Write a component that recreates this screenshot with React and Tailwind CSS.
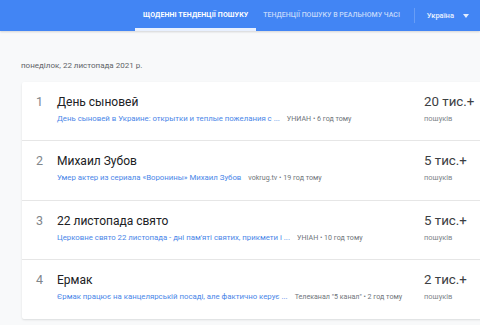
const items = [
  {
    n: 1,
    title: "День сыновей",
    link: "День сыновей в Украине: открытки и теплые пожелания с ...",
    meta: "УНИАН • 6 год тому",
    count: "20 тис.+",
  },
  {
    n: 2,
    title: "Михаил Зубов",
    link: "Умер актер из сериала «Воронины» Михаил Зубов",
    meta: "vokrug.tv • 19 год тому",
    count: "5 тис.+",
  },
  {
    n: 3,
    title: "22 листопада свято",
    link: "Церковне свято 22 листопада - дні пам'яті святих, прикмети і ...",
    meta: "УНІАН • 10 год тому",
    count: "5 тис.+",
  },
  {
    n: 4,
    title: "Ермак",
    link: "Єрмак працює на канцелярській посаді, але фактично керує ...",
    meta: 'Телеканал "5 канал" • 2 год тому',
    count: "2 тис.+",
  },
];

function Row({ item, last }) {
  return (
    <div
      className={
        "flex h-[59.3px] items-start " + (last ? "" : "border-b border-[#e6e6e6]")
      }
    >
      <div className="w-[35px] pt-[11px] pl-[14px] text-[12.5px] text-[#80868b]">{item.n}</div>
      <div className="w-[367px] pt-[12px]">
        <div className="text-[12px] leading-[16px] text-[#202124]">{item.title}</div>
        <div className="mt-[3px] flex items-baseline gap-[7px] whitespace-nowrap">
          <span className="text-[7.8px] text-[#4a86e8]">{item.link}</span>
          <span className="text-[7.1px] text-[#70757a]">{item.meta}</span>
        </div>
      </div>
      <div className="pt-[11px]">
        <div className="text-[13.3px] leading-[18px] text-[#3c4043] whitespace-nowrap">{item.count}</div>
        <div className="mt-[2px] text-[7.5px] text-[#80868b]">пошуків</div>
      </div>
    </div>
  );
}

export default function App() {
  return (
    <div
      className="h-[325px] w-[480px] overflow-hidden bg-[#f8f9fa]"
      style={{ fontFamily: "Roboto, 'Noto Sans', sans-serif" }}
    >
      <header className="flex h-[31px] items-stretch bg-[#4285f4] shadow-[0_1px_2px_rgba(0,0,0,0.15)]">
        <div className="ml-[135px] flex items-center border-b-[3px] border-[#e8f0fe] px-[8px] pt-[3px] text-[7px] font-bold tracking-[0.1px] text-white">
          ЩОДЕННІ ТЕНДЕНЦІЇ ПОШУКУ
        </div>
        <div className="flex items-center px-[7px] text-[7px] font-medium text-white/70">
          ТЕНДЕНЦІЇ ПОШУКУ В РЕАЛЬНОМУ ЧАСІ
        </div>
        <div className="my-[8px] ml-[7px] w-px bg-white/20" />
        <div className="ml-[12px] flex items-center gap-[9px] text-[7.5px] font-medium text-white/90">
          <span>Україна</span>
          <svg width="6" height="4" viewBox="0 0 6 4">
            <path d="M0 0 L6 0 L3 4 Z" fill="rgba(255,255,255,0.85)" />
          </svg>
        </div>
      </header>
      <div className="pl-[21px] pt-[29px]">
        <div className="text-[8px] text-[#5f6368]">понеділок, 22 листопада 2021 р.</div>
        <div className="mt-[10px] ml-[1px] w-[470px] rounded-[2px] bg-white shadow-[0_1px_2px_rgba(60,64,67,0.15)]">
          {items.map((it, i) => (
            <Row key={it.n} item={it} last={i === items.length - 1} />
          ))}
        </div>
      </div>
    </div>
  );
}
